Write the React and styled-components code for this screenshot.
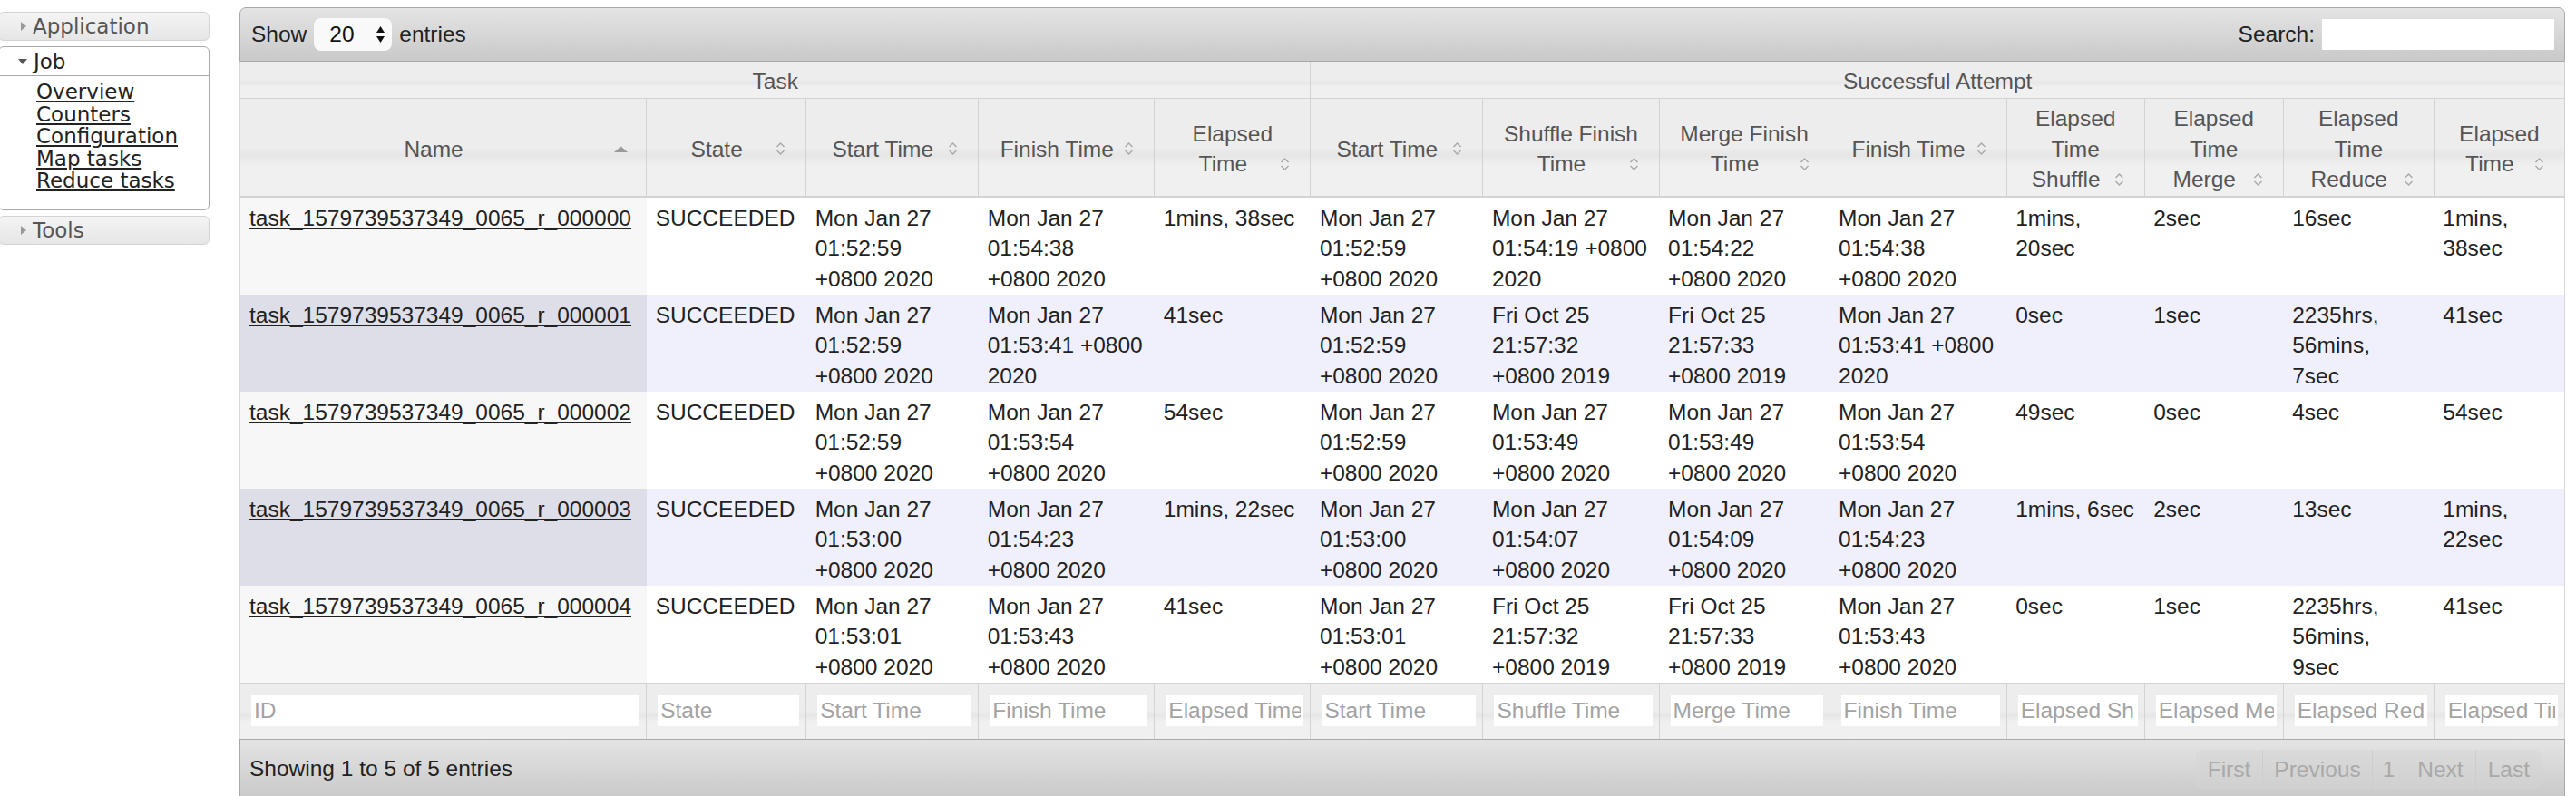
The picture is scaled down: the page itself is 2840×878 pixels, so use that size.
import React from 'react';
import styled, { createGlobalStyle } from 'styled-components';

const GlobalStyle = createGlobalStyle`
  html, body {
    margin: 0;
    padding: 0;
    background: #fff;
  }
  body {
    font-family: "Liberation Sans", Arial, sans-serif;
    color: #222;
  }
`;

const columns = [
  { title: 'Name', width: 448, sort: 'asc', filter: 'ID' },
  { title: 'State', width: 176, filter: 'State' },
  { title: 'Start Time', width: 190, filter: 'Start Time' },
  { title: 'Finish Time', width: 194, filter: 'Finish Time' },
  { title: 'Elapsed\nTime', width: 172, filter: 'Elapsed Time' },
  { title: 'Start Time', width: 190, filter: 'Start Time' },
  { title: 'Shuffle Finish\nTime', width: 194, filter: 'Shuffle Time' },
  { title: 'Merge Finish\nTime', width: 188, filter: 'Merge Time' },
  { title: 'Finish Time', width: 195, filter: 'Finish Time' },
  { title: 'Elapsed\nTime\nShuffle', width: 152, filter: 'Elapsed Shuffle Time' },
  { title: 'Elapsed\nTime\nMerge', width: 153, filter: 'Elapsed Merge Time' },
  { title: 'Elapsed\nTime\nReduce', width: 166, filter: 'Elapsed Reduce Time' },
  { title: 'Elapsed\nTime', width: 144, filter: 'Elapsed Time' },
];

const rows = [
  ['task_1579739537349_0065_r_000000', 'SUCCEEDED', 'Mon Jan 27\n01:52:59\n+0800 2020', 'Mon Jan 27\n01:54:38\n+0800 2020', '1mins, 38sec',
    'Mon Jan 27\n01:52:59\n+0800 2020', 'Mon Jan 27\n01:54:19 +0800\n2020', 'Mon Jan 27\n01:54:22\n+0800 2020', 'Mon Jan 27\n01:54:38\n+0800 2020',
    '1mins,\n20sec', '2sec', '16sec', '1mins,\n38sec'],
  ['task_1579739537349_0065_r_000001', 'SUCCEEDED', 'Mon Jan 27\n01:52:59\n+0800 2020', 'Mon Jan 27\n01:53:41 +0800\n2020', '41sec',
    'Mon Jan 27\n01:52:59\n+0800 2020', 'Fri Oct 25\n21:57:32\n+0800 2019', 'Fri Oct 25\n21:57:33\n+0800 2019', 'Mon Jan 27\n01:53:41 +0800\n2020',
    '0sec', '1sec', '2235hrs,\n56mins,\n7sec', '41sec'],
  ['task_1579739537349_0065_r_000002', 'SUCCEEDED', 'Mon Jan 27\n01:52:59\n+0800 2020', 'Mon Jan 27\n01:53:54\n+0800 2020', '54sec',
    'Mon Jan 27\n01:52:59\n+0800 2020', 'Mon Jan 27\n01:53:49\n+0800 2020', 'Mon Jan 27\n01:53:49\n+0800 2020', 'Mon Jan 27\n01:53:54\n+0800 2020',
    '49sec', '0sec', '4sec', '54sec'],
  ['task_1579739537349_0065_r_000003', 'SUCCEEDED', 'Mon Jan 27\n01:53:00\n+0800 2020', 'Mon Jan 27\n01:54:23\n+0800 2020', '1mins, 22sec',
    'Mon Jan 27\n01:53:00\n+0800 2020', 'Mon Jan 27\n01:54:07\n+0800 2020', 'Mon Jan 27\n01:54:09\n+0800 2020', 'Mon Jan 27\n01:54:23\n+0800 2020',
    '1mins, 6sec', '2sec', '13sec', '1mins,\n22sec'],
  ['task_1579739537349_0065_r_000004', 'SUCCEEDED', 'Mon Jan 27\n01:53:01\n+0800 2020', 'Mon Jan 27\n01:53:43\n+0800 2020', '41sec',
    'Mon Jan 27\n01:53:01\n+0800 2020', 'Fri Oct 25\n21:57:32\n+0800 2019', 'Fri Oct 25\n21:57:33\n+0800 2019', 'Mon Jan 27\n01:53:43\n+0800 2020',
    '0sec', '1sec', '2235hrs,\n56mins,\n9sec', '41sec'],
];

/* ---------- sidebar ---------- */

const Page = styled.div`
  display: flex;
  align-items: flex-start;
  gap: 33px;
  padding: 8px 12px 0 0;
`;

const Sidebar = styled.nav`
  flex: none;
  width: 233px;
  margin: 5px 0 0 -2px;
  display: flex;
  flex-direction: column;
  gap: 6px;
  font-family: "DejaVu Sans", Verdana, sans-serif;
  font-size: 23px;
`;

const Section = styled.div`
  border: 1px solid ${(p) => (p.$open ? '#a9a9a9' : '#d3d3d3')};
  border-radius: 6px;
  background: ${(p) => (p.$open ? '#fff' : 'linear-gradient(#f4f4f4, #e6e6e6)')};
  overflow: hidden;
`;

const SectionHead = styled.div`
  height: ${(p) => (p.$open ? 31 : 30)}px;
  display: flex;
  align-items: center;
  gap: 7px;
  padding-left: ${(p) => (p.$open ? 21 : 24)}px;
  color: ${(p) => (p.$open ? '#222' : '#555')};
  border-bottom: ${(p) => (p.$open ? '1px solid #a9a9a9' : 'none')};
`;

const SectionLinks = styled.ul`
  list-style: none;
  margin: 0;
  padding: 5px 0 19px 41px;
  line-height: 24.5px;
`;

const NavLink = styled.a`
  color: #222;
  text-decoration: underline;
`;

const Caret = ({ open }) =>
  open ? (
    <svg width="10" height="6" viewBox="0 0 10 6">
      <path d="M0 0 L10 0 L5 6 Z" fill="#555" />
    </svg>
  ) : (
    <svg width="6" height="10" viewBox="0 0 6 10">
      <path d="M0 0 L6 5 L0 10 Z" fill="#999" />
    </svg>
  );

/* ---------- table panel ---------- */

const Panel = styled.div`
  flex: 1;
  min-width: 0;
  font-size: 24.5px;
`;

const Toolbar = styled.div`
  box-sizing: border-box;
  height: ${(p) => (p.$bottom ? 66 : 60)}px;
  display: flex;
  align-items: center;
  justify-content: space-between;
  padding: ${(p) => (p.$bottom ? '0 25px 0 10px' : '0 11px 0 12px')};
  border: 1px solid #a9a9a9;
  border-radius: ${(p) => (p.$bottom ? '0' : '7px 7px 0 0')};
  background: linear-gradient(#e4e4e4, #c9c9c9);
  color: #222;
`;

const Inline = styled.div`
  display: flex;
  align-items: center;
  gap: 8px;
`;

const LengthSelect = styled.div`
  width: 86px;
  height: 36px;
  box-sizing: border-box;
  display: flex;
  align-items: center;
  justify-content: space-between;
  padding: 0 7px 0 17px;
  background: #f9f9f9;
  border-radius: 8px;
  color: #111;
`;

const SearchInput = styled.input`
  width: 256px;
  height: 34px;
  box-sizing: border-box;
  border: none;
  outline: none;
  background: #fff;
  font: inherit;
`;

const Table = styled.table`
  width: 100%;
  table-layout: fixed;
  border-collapse: collapse;
  border-left: 1px solid #d8d8d8;
  border-right: 1px solid #d8d8d8;
  line-height: 33.33px;
`;

const headBg = 'linear-gradient(#ededed 0%, #ededed 50%, #e6e6e6 58%, #f0f0f0 70%, #f0f0f0 100%)';

const GroupTh = styled.th`
  height: 40px;
  padding: 4px 0 0;
  box-sizing: border-box;
  font-weight: normal;
  text-align: center;
  color: #555;
  background: ${headBg};
  border-bottom: 1px solid #d3d3d3;
  border-right: 1px solid #d3d3d3;
`;

const ColTh = styled.th`
  height: 109px;
  box-sizing: border-box;
  padding: 4px 20px 0;
  font-weight: normal;
  text-align: center;
  vertical-align: middle;
  color: #555;
  white-space: pre-line;
  background: ${headBg};
  border-right: 1px solid #d3d3d3;
  border-bottom: 2px solid #d3d3d3;
`;

const SortIcon = styled.span`
  float: right;
  width: 15px;
  height: 33.33px;
  margin-left: 6px;
  display: flex;
  align-items: center;
  justify-content: center;
`;

const Td = styled.td`
  padding: 6px 5px 1px 10px;
  vertical-align: top;
  white-space: pre-line;
  color: #222;
  background: ${(p) =>
    p.$even ? (p.$sorted ? '#dedee9' : '#f0f0fc') : p.$sorted ? '#f7f7f7' : '#fff'};
`;

const TaskLink = styled.a`
  color: #222;
  text-decoration: underline;
`;

const FootTh = styled.th`
  height: 61px;
  padding: 0 7px 0 12px;
  font-weight: normal;
  background: ${headBg};
  border-top: 1px solid #d3d3d3;
  border-right: 1px solid #d3d3d3;
`;

const FilterInput = styled.input`
  display: block;
  width: 100%;
  height: 34px;
  box-sizing: border-box;
  padding: 0 3px;
  border: none;
  outline: none;
  background: #fff;
  font-family: inherit;
  font-weight: normal;
  font-size: 24.5px;
  color: #333;
  &::placeholder {
    color: #a3a3a3;
  }
`;

const Pager = styled.div`
  display: flex;
  height: 43px;
  border-radius: 7px;
  overflow: hidden;
  background: linear-gradient(#dadada, #d0d0d0);
  margin-top: 2px;
`;

const PageBtn = styled.span`
  display: flex;
  align-items: center;
  padding: 0 ${(p) => p.$pad}px;
  color: #a9a9a9;
  border-right: 1px solid #cdcdcd;
  &:last-child {
    border-right: none;
  }
`;

const SortGlyph = ({ dir }) =>
  dir === 'asc' ? (
    <svg width="15" height="7" viewBox="0 0 15 7">
      <path d="M0 7 L7.5 0.5 L15 7 Z" fill="#9a9a9a" />
    </svg>
  ) : (
    <svg width="13" height="18" viewBox="0 0 13 18">
      <path d="M2.5 7 L6.5 3 L10.5 7" fill="none" stroke="#aaa" strokeWidth="1.5" />
      <path d="M2.5 11 L6.5 15 L10.5 11" fill="none" stroke="#aaa" strokeWidth="1.5" />
    </svg>
  );

const SelectArrows = () => (
  <svg width="11" height="22" viewBox="0 0 11 22">
    <path d="M1 9 L5.5 2 L10 9 Z" fill="#111" />
    <path d="M1 13 L5.5 20 L10 13 Z" fill="#111" />
  </svg>
);

const jobLinks = ['Overview', 'Counters', 'Configuration', 'Map tasks', 'Reduce tasks'];

export default function App() {
  return (
    <>
      <GlobalStyle />
      <Page>
        <Sidebar>
          <Section>
            <SectionHead>
              <Caret />
              Application
            </SectionHead>
          </Section>
          <Section $open>
            <SectionHead $open>
              <Caret open />
              Job
            </SectionHead>
            <SectionLinks>
              {jobLinks.map((l) => (
                <li key={l}>
                  <NavLink href="#">{l}</NavLink>
                </li>
              ))}
            </SectionLinks>
          </Section>
          <Section>
            <SectionHead>
              <Caret />
              Tools
            </SectionHead>
          </Section>
        </Sidebar>

        <Panel>
          <Toolbar>
            <Inline>
              Show
              <LengthSelect>
                20
                <SelectArrows />
              </LengthSelect>
              entries
            </Inline>
            <Inline>
              Search:
              <SearchInput type="text" />
            </Inline>
          </Toolbar>

          <Table>
            <colgroup>
              {columns.map((c, i) => (
                <col key={i} style={{ width: c.width }} />
              ))}
            </colgroup>
            <thead>
              <tr>
                <GroupTh colSpan={5}>Task</GroupTh>
                <GroupTh colSpan={8}>Successful Attempt</GroupTh>
              </tr>
              <tr>
                {columns.map((c, i) => (
                  <ColTh key={i}>
                    {c.title}
                    <SortIcon>
                      <SortGlyph dir={c.sort} />
                    </SortIcon>
                  </ColTh>
                ))}
              </tr>
            </thead>
            <tbody>
              {rows.map((r, ri) => (
                <tr key={ri}>
                  {r.map((cell, ci) => (
                    <Td key={ci} $even={ri % 2 === 1} $sorted={ci === 0}>
                      {ci === 0 ? <TaskLink href="#">{cell}</TaskLink> : cell}
                    </Td>
                  ))}
                </tr>
              ))}
            </tbody>
            <tfoot>
              <tr>
                {columns.map((c, i) => (
                  <FootTh key={i}>
                    <FilterInput type="text" placeholder={c.filter} />
                  </FootTh>
                ))}
              </tr>
            </tfoot>
          </Table>

          <Toolbar $bottom>
            <span>Showing 1 to 5 of 5 entries</span>
            <Pager>
              <PageBtn $pad={13}>First</PageBtn>
              <PageBtn $pad={12}>Previous</PageBtn>
              <PageBtn $pad={11}>1</PageBtn>
              <PageBtn $pad={13}>Next</PageBtn>
              <PageBtn $pad={13}>Last</PageBtn>
            </Pager>
          </Toolbar>
        </Panel>
      </Page>
    </>
  );
}
